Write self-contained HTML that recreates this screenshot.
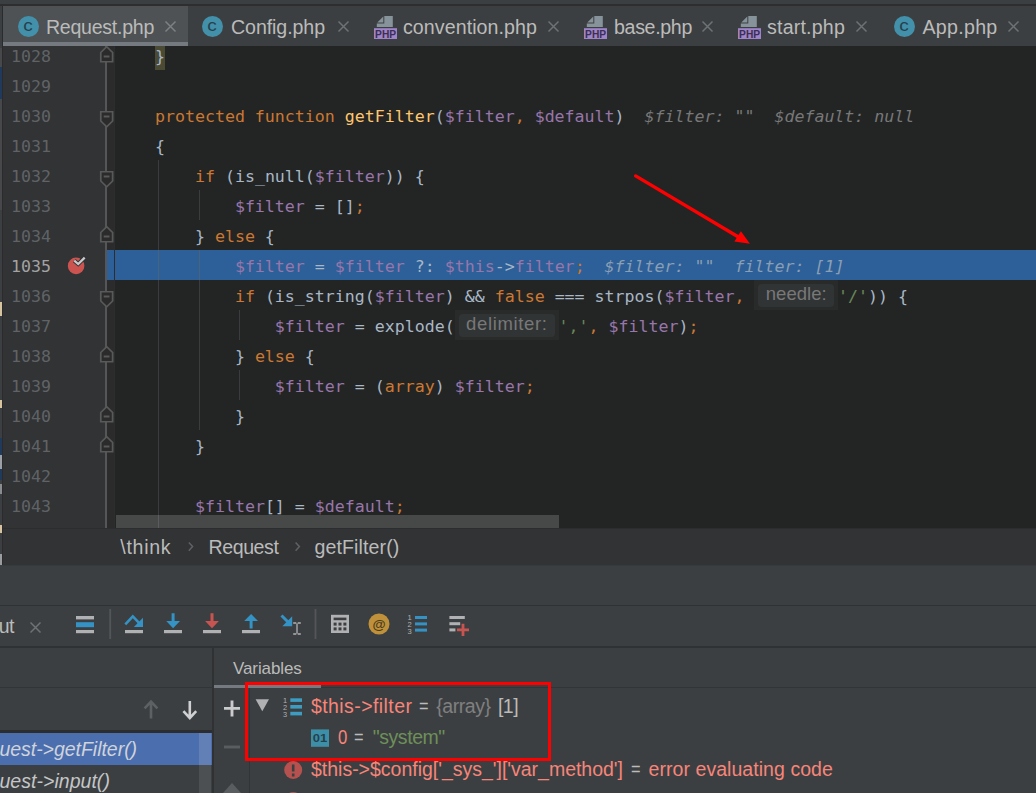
<!DOCTYPE html>
<html><head><meta charset="utf-8"><title>PhpStorm debug</title>
<style>
*{box-sizing:border-box;margin:0;padding:0}
html,body{width:1036px;height:793px;overflow:hidden;background:#3c3f41}
body{position:relative;font-family:"Liberation Sans",sans-serif;color:#bbbbbb}
.abs{position:absolute}
svg{position:absolute;overflow:visible}
#topline{left:0;top:4px;width:1036px;height:2px;background:#2c2e2f;z-index:5}
#leftstrip{left:0;top:5px;width:3px;height:560px;background:#3c3f41;border-right:1px solid #2b2b2b}
#tabs{left:3px;top:5px;width:1033px;height:41px;background:#3c3f41}
#tabs{font-size:19.6px;color:#bbbbbb;white-space:pre}
#tabs .lbl{position:absolute;top:9.5px;line-height:24px}
#tab1{left:0;top:0;width:185px;height:41px;background:#4e5254}
#tab1ul{left:0;top:37px;width:185px;height:4px;background:#747a80}
.cicon{position:absolute;width:21px;height:21px;border-radius:50%;background:#4390ab;top:11.4px}
.cicon span{position:absolute;left:0;top:0;width:21px;line-height:19px;text-align:center;font-size:16.5px;color:#25414d;transform:translateX(-0.5px) scaleX(1.15)}
#editor{left:3px;top:46px;width:1033px;height:482px;background:#232525;overflow:hidden}
#gutter{left:0;top:0;width:112px;height:482px;background:#313335}
#gutter2{left:104px;top:0;width:8px;height:482px;background:#2b2b2b}
.ln{position:absolute;left:8px;font-family:"DejaVu Sans Mono","Liberation Mono",monospace;font-size:16.6px;line-height:30px;height:30px;color:#606366;white-space:pre}
.code{position:absolute;font-family:"DejaVu Sans Mono","Liberation Mono",monospace;font-size:16.6px;line-height:30px;height:30px;color:#a9b7c6;white-space:pre;left:112px}
.k{color:#cc7832}.f{color:#ffc66d}.v{color:#9876aa}.s{color:#6a8759}
.iv{color:#787878;font-style:italic}
.mb{background:#4b4a35}
.hintw{display:inline-block;position:relative;height:30px;vertical-align:top}
.hinto{position:absolute;left:0;top:-2px;right:0;height:29.7px;background:#292b2b}
.hint{position:absolute;top:2px;font-family:"Liberation Sans",sans-serif;font-size:18.5px;line-height:19px;height:23px;color:#787878;background:#313435;border-radius:4px;text-align:center;white-space:pre}
.ig{position:absolute;width:1px;background:#3a3c3e}
#hl{left:104px;top:204px;width:929px;height:30px;background:#2d6099}
#hlsep{left:111px;top:0;width:1px;height:482px;background:#2b2d2e}
#bc{left:3px;top:528px;width:1033px;height:38px;background:#313335;border-top:1px solid #2b2d2e;border-bottom:1px solid #373a3c;font-size:19.6px;color:#bbbbbb;white-space:pre}
#bc span{position:absolute;top:6px;line-height:24px}

#bottom{left:0;top:605px;width:1036px;height:188px;overflow:hidden;white-space:pre}
#bottom .t{position:absolute;font-size:19.5px;line-height:24px;height:24px}
.sal{color:#f7857a}.g1{color:#bbbbbb}.g2{color:#808080}.gr{color:#6e8f5a}
</style></head>
<body>
<div id="topline" class="abs"></div>
<div id="leftstrip" class="abs"></div>
<div class="abs" style="left:0;top:48px;width:2px;height:162px;background:#46484a"></div>
<div class="abs" style="left:0;top:67px;width:2px;height:32px;background:#1f3a5a"></div>
<div class="abs" style="left:0;top:302px;width:1.5px;height:14px;background:#d6c3a0"></div>
<div class="abs" style="left:0;top:400px;width:1.5px;height:8px;background:#d6c3a0"></div>
<div class="abs" style="left:0;top:438px;width:2px;height:42px;background:#1f3a5a"></div>
<div class="abs" style="left:0;top:455px;width:1.5px;height:14px;background:#9aa0a6"></div>
<div class="abs" style="left:0;top:484px;width:1.5px;height:10px;background:#8a8d90"></div>
<div class="abs" style="left:0;top:525px;width:1.5px;height:8px;background:#d6c3a0"></div>
<div class="abs" style="left:0;top:554px;width:1.5px;height:11px;background:#9a9da0"></div>
<div id="tabs" class="abs">
<div id="tab1" class="abs"></div><div id="tab1ul" class="abs"></div>
<div class="cicon" style="left:14.600000000000001px"><span>c</span></div><span class="lbl" style="left:43px;letter-spacing:-0.284px">Request.php</span><svg style="left:161.5px;top:15.5px" width="11" height="11" viewBox="0 0 11 11"><path d="M0.5 0.5L10.5 10.5M10.5 0.5L0.5 10.5" stroke="#7d8184" stroke-width="1.5" fill="none"/></svg>
<div class="cicon" style="left:198.5px"><span>c</span></div><span class="lbl" style="left:228px;letter-spacing:-0.078px">Config.php</span><svg style="left:334.5px;top:15.5px" width="11" height="11" viewBox="0 0 11 11"><path d="M0.5 0.5L10.5 10.5M10.5 0.5L0.5 10.5" stroke="#6e7275" stroke-width="1.5" fill="none"/></svg>
<svg style="left:371.2px;top:0" width="24" height="41" viewBox="0 0 24 41"><path d="M10.3 11H18.8V22H2.8V18.5H10.3Z" fill="#87939a"/><path d="M3.3 17.5L9.3 11.5V17.5Z" fill="#87939a"/><rect x="0" y="23.2" width="23" height="10.8" fill="#a084c9"/><text x="11.6" y="32.6" text-anchor="middle" font-family="Liberation Sans,sans-serif" font-weight="bold" font-size="10.4" fill="#3b2f52" textLength="21" lengthAdjust="spacingAndGlyphs">PHP</text></svg><span class="lbl" style="left:400px;letter-spacing:0.077px">convention.php</span><svg style="left:544.5px;top:15.5px" width="11" height="11" viewBox="0 0 11 11"><path d="M0.5 0.5L10.5 10.5M10.5 0.5L0.5 10.5" stroke="#6e7275" stroke-width="1.5" fill="none"/></svg>
<svg style="left:581px;top:0" width="24" height="41" viewBox="0 0 24 41"><path d="M10.3 11H18.8V22H2.8V18.5H10.3Z" fill="#87939a"/><path d="M3.3 17.5L9.3 11.5V17.5Z" fill="#87939a"/><rect x="0" y="23.2" width="23" height="10.8" fill="#a084c9"/><text x="11.6" y="32.6" text-anchor="middle" font-family="Liberation Sans,sans-serif" font-weight="bold" font-size="10.4" fill="#3b2f52" textLength="21" lengthAdjust="spacingAndGlyphs">PHP</text></svg><span class="lbl" style="left:611px;letter-spacing:-0.328px">base.php</span><svg style="left:698.5px;top:15.5px" width="11" height="11" viewBox="0 0 11 11"><path d="M0.5 0.5L10.5 10.5M10.5 0.5L0.5 10.5" stroke="#6e7275" stroke-width="1.5" fill="none"/></svg>
<svg style="left:735.3px;top:0" width="24" height="41" viewBox="0 0 24 41"><path d="M10.3 11H18.8V22H2.8V18.5H10.3Z" fill="#87939a"/><path d="M3.3 17.5L9.3 11.5V17.5Z" fill="#87939a"/><rect x="0" y="23.2" width="23" height="10.8" fill="#a084c9"/><text x="11.6" y="32.6" text-anchor="middle" font-family="Liberation Sans,sans-serif" font-weight="bold" font-size="10.4" fill="#3b2f52" textLength="21" lengthAdjust="spacingAndGlyphs">PHP</text></svg><span class="lbl" style="left:764px;letter-spacing:0.194px">start.php</span><svg style="left:853.0px;top:15.5px" width="11" height="11" viewBox="0 0 11 11"><path d="M0.5 0.5L10.5 10.5M10.5 0.5L0.5 10.5" stroke="#6e7275" stroke-width="1.5" fill="none"/></svg>
<div class="cicon" style="left:890.8px"><span>c</span></div><span class="lbl" style="left:919.5px;letter-spacing:0.286px">App.php</span><svg style="left:1004.5px;top:15.5px" width="11" height="11" viewBox="0 0 11 11"><path d="M0.5 0.5L10.5 10.5M10.5 0.5L0.5 10.5" stroke="#6e7275" stroke-width="1.5" fill="none"/></svg>
</div>
<div id="editor" class="abs">
  <div id="gutter" class="abs"></div>
  <div id="gutter2" class="abs"></div>
  <div id="hl" class="abs"></div><div id="hlsep" class="abs"></div>
  <!--LINES-->
<div class="abs" style="left:152px;top:-6px;width:10px;height:30px;background:#4b4a35"></div>
<div class="ig" style="left:155px;top:114px;height:90px"></div>
<div class="ig" style="left:155px;top:204px;height:30px;background:#48637f"></div>
<div class="ig" style="left:155px;top:234px;height:248px"></div>
<div class="ig" style="left:196px;top:144px;height:30px"></div>
<div class="ig" style="left:196px;top:204px;height:30px;background:#48637f"></div>
<div class="ig" style="left:196px;top:234px;height:150px"></div>
<div class="ig" style="left:236px;top:264px;height:30px"></div>
<div class="ig" style="left:236px;top:324px;height:30px"></div>
<div class="ln" style="top:-4px;color:#606366">1028</div>
<div class="code" style="top:-4px">    }</div>
<div class="ln" style="top:26px;color:#606366">1029</div>
<div class="ln" style="top:56px;color:#606366">1030</div>
<div class="code" style="top:56px">    <span class="k">protected function </span><span class="f">getFilter</span>(<span class="v">$filter</span><span class="k">, </span><span class="v">$default</span>)<span class="iv">  $filter: ""  $default: null</span></div>
<div class="ln" style="top:86px;color:#606366">1031</div>
<div class="code" style="top:86px">    {</div>
<div class="ln" style="top:116px;color:#606366">1032</div>
<div class="code" style="top:116px">        <span class="k">if </span>(is_null(<span class="v">$filter</span>)) {</div>
<div class="ln" style="top:146px;color:#606366">1033</div>
<div class="code" style="top:146px">            <span class="v">$filter </span>= []<span class="k">;</span></div>
<div class="ln" style="top:176px;color:#606366">1034</div>
<div class="code" style="top:176px">        } <span class="k">else </span>{</div>
<div class="ln" style="top:206px;color:#a4a3a3">1035</div>
<div class="code" style="top:206px">            <span class="v">$filter </span>= <span class="v">$filter </span>?: <span class="v">$this</span>-&gt;<span class="v">filter</span><span class="k">;</span><span class="iv" style="color:#8a9eb4">  $filter: ""  filter: [1]</span></div>
<div class="ln" style="top:236px;color:#606366">1036</div>
<div class="code" style="top:236px">            <span class="k">if </span>(is_string(<span class="v">$filter</span>) &amp;&amp; <span class="k">false </span>=== strpos(<span class="v">$filter</span><span class="k">, </span><span class="hintw" style="width:83.5px"><span class="hinto"></span><span class="hint" style="left:3.8px;width:76px;letter-spacing:0.04px">needle:</span></span><span class="s">'/'</span>)) {</div>
<div class="ln" style="top:266px;color:#606366">1037</div>
<div class="code" style="top:266px">                <span class="v">$filter </span>= explode(<span class="hintw" style="width:103.8px"><span class="hinto"></span><span class="hint" style="left:3.8px;width:96.6px;letter-spacing:0.65px">delimiter:</span></span><span class="s">','</span><span class="k">, </span><span class="v">$filter</span>)<span class="k">;</span></div>
<div class="ln" style="top:296px;color:#606366">1038</div>
<div class="code" style="top:296px">            } <span class="k">else </span>{</div>
<div class="ln" style="top:326px;color:#606366">1039</div>
<div class="code" style="top:326px">                <span class="v">$filter </span>= (<span class="k">array</span>) <span class="v">$filter</span><span class="k">;</span></div>
<div class="ln" style="top:356px;color:#606366">1040</div>
<div class="code" style="top:356px">            }</div>
<div class="ln" style="top:386px;color:#606366">1041</div>
<div class="code" style="top:386px">        }</div>
<div class="ln" style="top:416px;color:#606366">1042</div>
<div class="ln" style="top:446px;color:#606366">1043</div>
<div class="code" style="top:446px">        <span class="v">$filter</span>[] = <span class="v">$default</span><span class="k">;</span></div>
<div class="abs" style="left:102.3px;top:0;width:1.6px;height:482px;background:#555657"></div>
<svg style="left:97.1px;top:0px" width="13.4" height="16.5" viewBox="0 0 13 16.5" preserveAspectRatio="none"><path d="M0.75 15.75H12.25V6.5L6.5 0.75L0.75 6.5Z" fill="#2b2b2b" stroke="#585959" stroke-width="1.7"/><path d="M3.6 10.5H9.2" stroke="#585959" stroke-width="2"/></svg>
<svg style="left:97.1px;top:64.5px" width="13.4" height="16.5" viewBox="0 0 13 16.5" preserveAspectRatio="none"><path d="M0.75 0.75H12.25V10L6.5 15.75L0.75 10Z" fill="#2b2b2b" stroke="#585959" stroke-width="1.7"/><path d="M3.6 5.5H9.2" stroke="#585959" stroke-width="2"/></svg>
<svg style="left:97.1px;top:124.5px" width="13.4" height="16.5" viewBox="0 0 13 16.5" preserveAspectRatio="none"><path d="M0.75 0.75H12.25V10L6.5 15.75L0.75 10Z" fill="#2b2b2b" stroke="#585959" stroke-width="1.7"/><path d="M3.6 5.5H9.2" stroke="#585959" stroke-width="2"/></svg>
<svg style="left:97.1px;top:180px" width="13.4" height="16.5" viewBox="0 0 13 16.5" preserveAspectRatio="none"><path d="M0.75 15.75H12.25V6.5L6.5 0.75L0.75 6.5Z" fill="#2b2b2b" stroke="#585959" stroke-width="1.7"/><path d="M3.6 10.5H9.2" stroke="#585959" stroke-width="2"/></svg>
<svg style="left:97.1px;top:244.5px" width="13.4" height="16.5" viewBox="0 0 13 16.5" preserveAspectRatio="none"><path d="M0.75 0.75H12.25V10L6.5 15.75L0.75 10Z" fill="#2b2b2b" stroke="#585959" stroke-width="1.7"/><path d="M3.6 5.5H9.2" stroke="#585959" stroke-width="2"/></svg>
<svg style="left:97.1px;top:300px" width="13.4" height="16.5" viewBox="0 0 13 16.5" preserveAspectRatio="none"><path d="M0.75 15.75H12.25V6.5L6.5 0.75L0.75 6.5Z" fill="#2b2b2b" stroke="#585959" stroke-width="1.7"/><path d="M3.6 10.5H9.2" stroke="#585959" stroke-width="2"/></svg>
<svg style="left:97.1px;top:360px" width="13.4" height="16.5" viewBox="0 0 13 16.5" preserveAspectRatio="none"><path d="M0.75 15.75H12.25V6.5L6.5 0.75L0.75 6.5Z" fill="#2b2b2b" stroke="#585959" stroke-width="1.7"/><path d="M3.6 10.5H9.2" stroke="#585959" stroke-width="2"/></svg>
<svg style="left:97.1px;top:390px" width="13.4" height="16.5" viewBox="0 0 13 16.5" preserveAspectRatio="none"><path d="M0.75 15.75H12.25V6.5L6.5 0.75L0.75 6.5Z" fill="#2b2b2b" stroke="#585959" stroke-width="1.7"/><path d="M3.6 10.5H9.2" stroke="#585959" stroke-width="2"/></svg>
<svg style="left:64px;top:207px" width="24" height="24" viewBox="0 0 24 24"><circle cx="9.1" cy="12.9" r="8.3" fill="#cb5350"/><path d="M7.3 7.7L11.2 11L17.7 4.6" stroke="#313335" stroke-width="4.2" fill="none"/><path d="M7.3 7.7L11.2 11L17.7 4.6" stroke="#c8c9ca" stroke-width="2.2" fill="none"/></svg>
<svg style="left:0;top:0" width="1033" height="482" viewBox="3 46 1033 482"><path d="M635.6 175.9L741 238.5" stroke="#ff0000" stroke-width="3.3" stroke-linecap="round" fill="none"/><path d="M749.9 243.7L734.4 241.4L740.9 231.2Z" fill="#ff0000"/></svg>
<div class="abs" style="left:113px;top:469px;width:443px;height:13px;background:rgba(255,255,255,0.165)"></div>
<!--/LINES-->
</div>
<div id="bc" class="abs"><span style="left:117.3px;letter-spacing:0.69px">\think</span><span style="left:205.5px;letter-spacing:-0.43px">Request</span><span style="left:311.5px;letter-spacing:0.1px">getFilter()</span>
<svg style="left:0;top:-1px" width="320" height="37" viewBox="3 528 320 37"><path d="M188.8 542.4L192.6 546.6L188.8 550.8M295.6 542.4L299.4 546.6L295.6 550.8" stroke="#5f6264" stroke-width="1.5" fill="none"/></svg></div>
<div id="bottom" class="abs">
<div class="abs" style="left:0;top:0;width:1036px;height:1px;background:#2f3133"></div>
<div class="abs" style="left:0;top:41px;width:1036px;height:2px;background:#2f3133"></div>
<div class="abs" style="left:212px;top:43px;width:1.5px;height:145px;background:#2f3133"></div>
<div class="abs" style="left:0;top:82px;width:1036px;height:1px;background:#323537"></div>
<div class="abs" style="left:213.5px;top:80px;width:107.5px;height:3px;background:#747a80"></div>
<span class="t g1" style="left:-1.2px;top:8.84px;letter-spacing:-0.6px">ut</span>
<svg style="left:29.5px;top:16.5px" width="11" height="11" viewBox="0 0 11 11"><path d="M0.5 0.5L10.5 10.5M10.5 0.5L0.5 10.5" stroke="#6e7275" stroke-width="1.5" fill="none"/></svg>
<svg style="left:0;top:0" width="480" height="42" viewBox="0 605 480 42">
<rect x="76" y="616" width="18" height="3.4" fill="#afb1b3"/><rect x="76" y="622.2" width="18" height="5" fill="#3592c4"/><rect x="76" y="630" width="18" height="3.2" fill="#afb1b3"/>
<rect x="109.3" y="609" width="1.8" height="30" fill="#535658"/>
<rect x="314.6" y="609" width="1.8" height="30" fill="#535658"/>
<rect x="125" y="630" width="18" height="3.2" fill="#afb1b3"/>
<path d="M125.3 624.3L132.8 616.3L139 622.8" stroke="#3592c4" stroke-width="2.6" fill="none"/><path d="M143 617.8V627H133.8Z" fill="#3592c4"/>
<rect x="164" y="630" width="18" height="3.2" fill="#afb1b3"/>
<path d="M171.6 613.3H174.6V621H180L173.1 628.2L166.2 621H171.6Z" fill="#3592c4"/>
<rect x="203" y="630" width="18" height="3.2" fill="#afb1b3"/>
<path d="M210.5 613.3H213.5V621H218.9L212 628.2L205.1 621H210.5Z" fill="#c75450"/>
<rect x="242" y="630" width="18" height="3.2" fill="#afb1b3"/>
<path d="M249.6 628.5H252.6V621H258L251.1 614L244.2 621H249.6Z" fill="#3592c4"/>
<path d="M281.5 615.5L289 623" stroke="#3592c4" stroke-width="3" fill="none"/><path d="M292.2 616.3V626.2H282.3Z" fill="#3592c4"/>
<path d="M293.2 623H296.3M297.7 623H300.8M293.2 634H296.3M297.7 634H300.8M297 623.5V633.5" stroke="#afb1b3" stroke-width="1.3" fill="none"/>
<rect x="331" y="614.8" width="18" height="18.2" fill="#afb1b3"/>
<rect x="333.6" y="617.6" width="12.8" height="2.6" fill="#3c3f41"/>
<g fill="#3c3f41"><rect x="333.6" y="622.6" width="3" height="3"/><rect x="338.5" y="622.6" width="3" height="3"/><rect x="343.4" y="622.6" width="3" height="3"/><rect x="333.6" y="627.4" width="3" height="3"/><rect x="338.5" y="627.4" width="3" height="3"/><rect x="343.4" y="627.4" width="3" height="3"/></g>
<circle cx="379" cy="624" r="10.5" fill="#c0913b"/>
<text x="379" y="628.6" text-anchor="middle" font-family="Liberation Sans,sans-serif" font-size="13.5" font-weight="bold" fill="#4d3d1c">@</text>
<g font-family="Liberation Sans,sans-serif" font-size="7.6" fill="#afb1b3"><text x="407.5" y="620.2">1</text><text x="407.5" y="627">2</text><text x="407.5" y="633.8">3</text></g>
<rect x="415" y="616" width="12" height="3" fill="#3592c4"/><rect x="415" y="622.4" width="12" height="3" fill="#3592c4"/><rect x="415" y="628.6" width="12" height="3" fill="#3592c4"/>
<rect x="449.4" y="616" width="15.4" height="3" fill="#afb1b3"/><rect x="449.4" y="622.2" width="10.8" height="3" fill="#afb1b3"/><rect x="449.4" y="628.4" width="6" height="3" fill="#afb1b3"/>
<path d="M463 623.8V636M457 629.9H469" stroke="#c75450" stroke-width="2.8" fill="none"/>
</svg>
<span class="abs g1" style="left:233px;top:51.8px;font-size:17px;line-height:24px;letter-spacing:-0.1px">Variables</span>
<div class="abs" style="left:0;top:125px;width:212px;height:3px;background:#2b2d2e"></div>
<div class="abs" style="left:0;top:128px;width:212px;height:32px;background:#4b6eaf"></div>
<div class="abs" style="left:198.5px;top:128px;width:12.5px;height:32px;background:#6380b6"></div>
<div class="abs" style="left:198.5px;top:160px;width:12.5px;height:28px;background:#4d5052"></div>
<span class="t g1" style="left:-0.6px;top:131.64px;letter-spacing:-0.03px;font-style:italic;color:#cfd3da">uest-&gt;getFilter()</span>
<span class="t g1" style="left:-0.6px;top:163.94px;letter-spacing:0.04px;font-style:italic;color:#c4c6c8">uest-&gt;input()</span>
<svg style="left:0;top:0" width="260" height="188" viewBox="0 605 260 188">
<path d="M151 718.6V702M144.6 708.4L151 701.6L157.4 708.4" stroke="#5e6163" stroke-width="2.6" fill="none"/>
<path d="M189.8 701V717.6M183.4 711.2L189.8 718L196.2 711.2" stroke="#ced0d2" stroke-width="2.6" fill="none"/>
<path d="M224 708.4H240M232 700.4V716.4" stroke="#c9cbcd" stroke-width="2.9" fill="none"/>
<path d="M224 747H240" stroke="#5a5d5f" stroke-width="2.9" fill="none"/>
<path d="M232 783L223 793H241Z" fill="#5a5d5f"/>
</svg>
<div class="abs" style="left:248.5px;top:83px;width:1.2px;height:105px;background:#323537"></div>
<svg style="left:250px;top:83px" width="90" height="105" viewBox="250 688 90 105">
<path d="M255.6 699.3H269L262.3 711.3Z" fill="#afb1b3"/>
<g font-family="Liberation Sans,sans-serif" font-size="7.4" fill="#afb1b3"><text x="283" y="702.6">1</text><text x="283" y="709.6">2</text><text x="283" y="716.6">3</text></g>
<rect x="290.3" y="698.3" width="11.7" height="3.6" fill="#3d9cc0"/><rect x="290.3" y="705" width="11.7" height="3.6" fill="#3d9cc0"/><rect x="290.3" y="711.8" width="11.7" height="3.6" fill="#3d9cc0"/>
<rect x="311" y="729.4" width="18" height="17.4" fill="#3d8fa8"/>
<text x="320" y="742.3" text-anchor="middle" font-family="Liberation Sans,sans-serif" font-weight="bold" font-size="11.5" fill="#25414d" textLength="14.5" lengthAdjust="spacingAndGlyphs">01</text>
<circle cx="293.2" cy="770" r="9" fill="#b5524f"/>
<path d="M293.2 764.4V771.6M293.2 773.6V776.4" stroke="#3c3f41" stroke-width="2.6" fill="none"/>
<circle cx="293.2" cy="801" r="9" fill="#b5524f"/>
</svg>
<span class="t sal" style="left:311px;top:89.14px;letter-spacing:0.414px">$this-&gt;filter</span><span class="t g1" style="left:419px;top:89.14px;letter-spacing:0px;transform:scaleX(0.84);transform-origin:0 0">=</span><span class="t g2" style="left:436.2px;top:89.14px;letter-spacing:-0.42px">{array}</span><span class="t g1" style="left:498px;top:89.14px;letter-spacing:-0.56px">[1]</span>
<span class="t sal" style="left:337.6px;top:119.74px;letter-spacing:0px;transform:scaleX(0.86);transform-origin:0 0">0</span><span class="t g1" style="left:354px;top:119.74px;letter-spacing:0px;transform:scaleX(0.84);transform-origin:0 0">=</span><span class="t gr" style="left:372.8px;top:119.74px;letter-spacing:-0.45px">"system"</span>
<span class="t sal" style="left:311px;top:152.3px;letter-spacing:-0.012px">$this-&gt;$config['_sys_']['var_method']</span><span class="t g1" style="left:631.3px;top:152.3px;letter-spacing:0px;transform:scaleX(0.84);transform-origin:0 0">=</span><span class="t sal" style="left:648.6px;top:152.3px;letter-spacing:0.052px">error evaluating code</span>
<span class="t sal" style="left:311px;top:184.9px;letter-spacing:0px">$this-&gt;$config['_sys_']['var_ajax']</span>
<div class="abs" style="left:245px;top:77.4px;width:306px;height:78.8px;border:3px solid #ff0000"></div>
</div>
</body></html>
